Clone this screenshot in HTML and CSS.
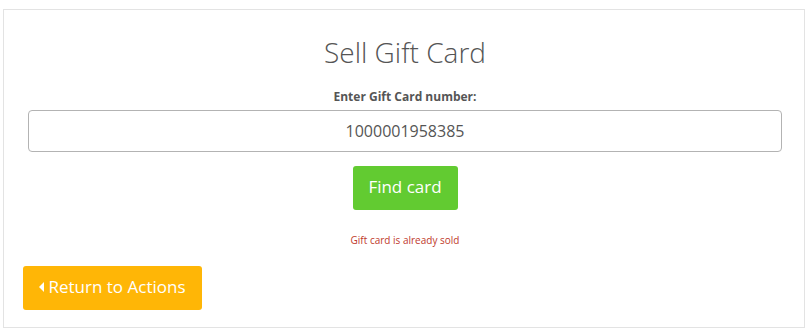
FILE: index.html
```html
<!DOCTYPE html>
<html>
<head>
<meta charset="utf-8">
<link rel="stylesheet" href="styles.css">
</head>
<body>
<div class="card">
  <div class="form">
    <h1 class="title">Sell Gift Card</h1>
    <label class="label" for="num">Enter Gift Card number:</label>
    <input class="input" id="num" type="text" value="1000001958385">
    <button class="btn btn-find">Find card</button>
    <div class="error">Gift card is already sold</div>
  </div>
  <button class="btn btn-return"><svg class="caret" width="5" height="10" viewBox="0 0 5 10"><path d="M5 0 L0 5 L5 10 Z" fill="#fff"/></svg>Return to Actions</button>
</div>
</body>
</html>
```
FILE: styles.css
```css
html, body {
  margin: 0;
  padding: 0;
  background: #fff;
}
body {
  font-family: "Open Sans", "Liberation Sans", sans-serif;
  color: #555;
}
.card {
  margin: 9px 5px 2px 3px;
  height: 319px;
  box-sizing: border-box;
  border: 1px solid #e3e3e3;
  padding: 0 22px 0 19px;
  display: flex;
  flex-direction: column;
  align-items: flex-start;
}
.form {
  align-self: stretch;
  margin-left: 5px;
  display: flex;
  flex-direction: column;
  align-items: center;
}
.title {
  margin: 22px 0 0;
  font-size: 28px;
  font-weight: 300;
  line-height: 40px;
  color: #555;
}
.label {
  margin-top: 17px;
  font-size: 12px;
  font-weight: 700;
  line-height: 16px;
  color: #555;
}
.input {
  margin-top: 5px;
  box-sizing: border-box;
  width: 100%;
  height: 42px;
  border: 1px solid #b3b3b3;
  border-radius: 4px;
  font-family: "Open Sans", "Liberation Sans", sans-serif;
  font-size: 16px;
  color: #555;
  text-align: center;
  padding: 0;
  outline: none;
}
.btn {
  border: none;
  border-radius: 3px;
  color: #fff;
  font-family: "Open Sans", "Liberation Sans", sans-serif;
  font-size: 17px;
  height: 44px;
  padding: 0 0 3px;
  display: flex;
  align-items: center;
  justify-content: center;
}
.btn-find {
  margin-top: 14px;
  width: 105px;
  background: #62cb31;
}
.error {
  margin-top: 23px;
  font-size: 10px;
  line-height: 14px;
  color: #c0392b;
}
.btn-return {
  margin-top: 19px;
  margin-left: 0;
  width: 179px;
  background: #ffb606;
}
.caret {
  margin-right: 4px;
}
```
